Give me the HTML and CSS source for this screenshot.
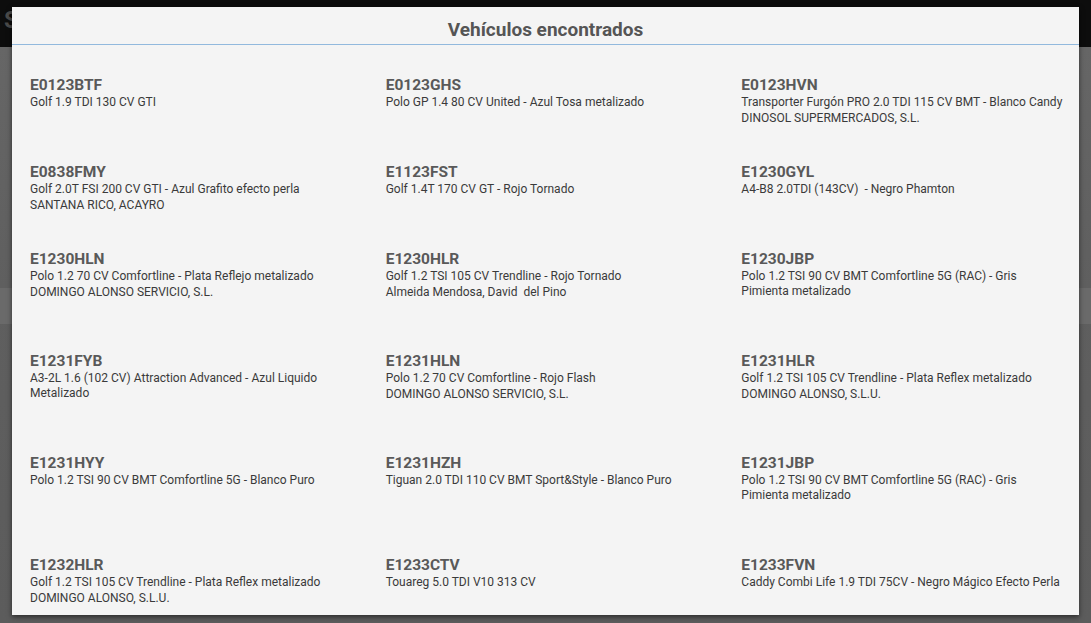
FILE: index.html
```html
<!DOCTYPE html>
<html lang="es">
<head>
<meta charset="utf-8">
<title>Vehículos encontrados</title>
<link rel="stylesheet" href="styles.css">
</head>
<body>
<div class="backdrop">
  <div class="topbar"><span class="app-title">S</span></div>
  <div class="page">
    <div class="band"></div>
  </div>
</div>

<div class="modal">
  <div class="modal-header">Vehículos encontrados</div>
  <div class="modal-body">
    <div class="grid">
      <div class="item"><div class="plate">E0123BTF</div><div class="desc">Golf 1.9 TDI 130 CV GTI</div><div class="owner"></div></div>
      <div class="item"><div class="plate">E0123GHS</div><div class="desc">Polo GP 1.4 80 CV United - Azul Tosa metalizado</div><div class="owner"></div></div>
      <div class="item"><div class="plate">E0123HVN</div><div class="desc">Transporter Furgón PRO 2.0 TDI 115 CV BMT - Blanco Candy</div><div class="owner">DINOSOL SUPERMERCADOS, S.L.</div></div>

      <div class="item"><div class="plate">E0838FMY</div><div class="desc">Golf 2.0T FSI 200 CV GTI - Azul Grafito efecto perla</div><div class="owner">SANTANA RICO, ACAYRO</div></div>
      <div class="item"><div class="plate">E1123FST</div><div class="desc">Golf 1.4T 170 CV GT - Rojo Tornado</div><div class="owner"></div></div>
      <div class="item"><div class="plate">E1230GYL</div><div class="desc">A4-B8 2.0TDI (143CV) &nbsp;- Negro Phamton</div><div class="owner"></div></div>

      <div class="item"><div class="plate">E1230HLN</div><div class="desc">Polo 1.2 70 CV Comfortline - Plata Reflejo metalizado</div><div class="owner">DOMINGO ALONSO SERVICIO, S.L.</div></div>
      <div class="item"><div class="plate">E1230HLR</div><div class="desc">Golf 1.2 TSI 105 CV Trendline - Rojo Tornado</div><div class="owner">Almeida Mendosa, David &nbsp;del Pino</div></div>
      <div class="item"><div class="plate">E1230JBP</div><div class="desc">Polo 1.2 TSI 90 CV BMT Comfortline 5G (RAC) - Gris Pimienta metalizado</div><div class="owner"></div></div>

      <div class="item"><div class="plate">E1231FYB</div><div class="desc">A3-2L 1.6 (102 CV) Attraction Advanced - Azul Liquido Metalizado</div><div class="owner"></div></div>
      <div class="item"><div class="plate">E1231HLN</div><div class="desc">Polo 1.2 70 CV Comfortline - Rojo Flash</div><div class="owner">DOMINGO ALONSO SERVICIO, S.L.</div></div>
      <div class="item"><div class="plate">E1231HLR</div><div class="desc">Golf 1.2 TSI 105 CV Trendline - Plata Reflex metalizado</div><div class="owner">DOMINGO ALONSO, S.L.U.</div></div>

      <div class="item"><div class="plate">E1231HYY</div><div class="desc">Polo 1.2 TSI 90 CV BMT Comfortline 5G - Blanco Puro</div><div class="owner"></div></div>
      <div class="item"><div class="plate">E1231HZH</div><div class="desc">Tiguan 2.0 TDI 110 CV BMT Sport&amp;Style - Blanco Puro</div><div class="owner"></div></div>
      <div class="item"><div class="plate">E1231JBP</div><div class="desc">Polo 1.2 TSI 90 CV BMT Comfortline 5G (RAC) - Gris Pimienta metalizado</div><div class="owner"></div></div>

      <div class="item"><div class="plate">E1232HLR</div><div class="desc">Golf 1.2 TSI 105 CV Trendline - Plata Reflex metalizado</div><div class="owner">DOMINGO ALONSO, S.L.U.</div></div>
      <div class="item"><div class="plate">E1233CTV</div><div class="desc">Touareg 5.0 TDI V10 313 CV</div><div class="owner"></div></div>
      <div class="item"><div class="plate">E1233FVN</div><div class="desc">Caddy Combi Life 1.9 TDI 75CV - Negro Mágico Efecto Perla</div><div class="owner"></div></div>
    </div>
  </div>
</div>
</body>
</html>
```

FILE: styles.css
```css
* { box-sizing: border-box; }

html, body {
  margin: 0;
  padding: 0;
  width: 100%;
  height: 100%;
  overflow: hidden;
}

body {
  font-family: Roboto, "Noto Sans", "Liberation Sans", sans-serif;
  background: #5c5c5c;
}

.backdrop {
  display: flex;
  flex-direction: column;
  height: 100%;
}

.topbar {
  height: 47px;
  background: #0d0d0d;
  padding: 6px 0 0 4px;
}

.app-title {
  font-size: 24px;
  font-weight: bold;
  color: #4a4a4a;
}

.page {
  flex: 1;
  background: linear-gradient(#666666, #5f5f5f 240px, #5c5c5c);
  padding-top: 241px;
}

.band {
  height: 36px;
  background: #6a6a6a;
}

.modal {
  position: absolute;
  top: 7px;
  left: 12px;
  width: 1067px;
  height: 608px;
  background: #f4f4f4;
  box-shadow: 0 2px 5px rgba(0, 0, 0, 0.55);
  display: flex;
  flex-direction: column;
}

.modal-header {
  padding: 12px 0 4px;
  line-height: 21px;
  font-size: 19px;
  font-weight: bold;
  color: #555555;
  text-align: center;
  border-bottom: 1px solid #92b9dd;
}

.modal-body {
  flex: 1;
  overflow: hidden;
  padding-top: 12.5px;
}

.grid {
  display: grid;
  grid-template-columns: repeat(3, 1fr);
}

.item {
  padding: 18px 12px 18px 18px;
}

.plate {
  font-size: 15.5px;
  line-height: 19px;
  font-weight: bold;
  color: #595959;
}

.desc {
  font-size: 12px;
  line-height: 15px;
  color: #3a3a3a;
}

.owner {
  font-size: 12px;
  line-height: 17px;
  min-height: 17px;
  color: #3a3a3a;
}
```
